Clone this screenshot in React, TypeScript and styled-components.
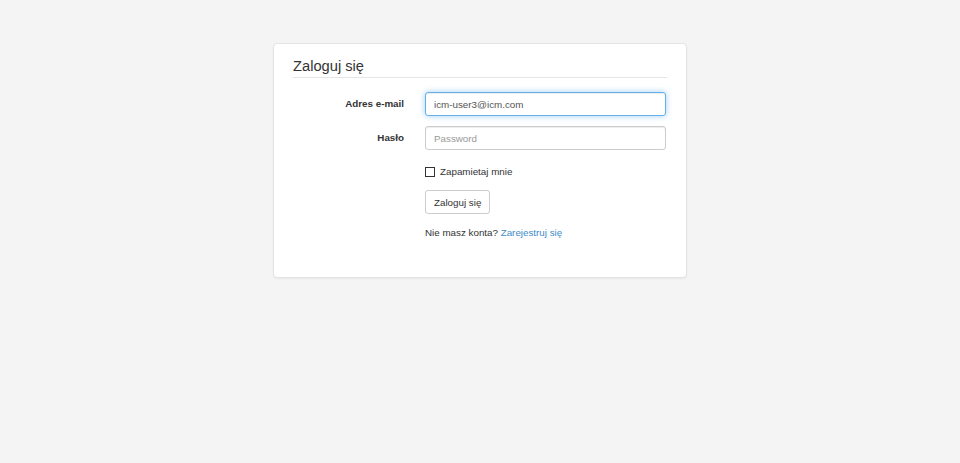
import React from "react";
import styled, { createGlobalStyle } from "styled-components";

const GlobalStyle = createGlobalStyle`
  html, body {
    margin: 0;
    padding: 0;
    background: #f4f4f4;
    font-family: "Liberation Sans", Arial, Helvetica, sans-serif;
    font-size: 9.8px;
    color: #333;
  }
  * { box-sizing: border-box; }
`;

const Page = styled.div`
  min-height: 463px;
  display: flex;
  justify-content: center;
  align-items: flex-start;
  padding-top: 43px;
`;

const Card = styled.div`
  width: 414px;
  background: #fff;
  border: 1px solid #e4e4e4;
  border-radius: 4px;
  box-shadow: 0 1px 2px rgba(0, 0, 0, 0.05);
  padding: 12px 19px 37px 19px;
`;

const Legend = styled.div`
  font-size: 14.7px;
  line-height: 21px;
  color: #333;
  border-bottom: 1px solid #e5e5e5;
  margin-bottom: 14px;
`;

const Form = styled.form`
  display: grid;
  grid-template-columns: 111px 241px;
  column-gap: 21px;
  row-gap: 10px;
  align-items: center;
`;

const Label = styled.label`
  text-align: right;
  font-weight: bold;
  line-height: 14px;
`;

const Input = styled.input<{ $focused?: boolean }>`
  display: block;
  width: 100%;
  height: 24px;
  margin: 0;
  padding: 0 8px;
  font-family: inherit;
  font-size: 9.8px;
  color: #555;
  background: #fff;
  border: 1px solid ${(p) => (p.$focused ? "#66afe9" : "#ccc")};
  border-radius: 3px;
  outline: none;
  box-shadow: ${(p) =>
    p.$focused
      ? "inset 0 1px 1px rgba(0,0,0,.075), 0 0 6px rgba(102,175,233,.6)"
      : "inset 0 1px 1px rgba(0,0,0,.075)"};
  &::placeholder {
    color: #999;
  }
`;

const Offset = styled.div<{ $top?: number }>`
  grid-column: 2;
  margin-top: ${(p) => p.$top ?? 0}px;
`;

const CheckRow = styled.label`
  display: flex;
  align-items: center;
  gap: 5px;
  line-height: 14px;
  padding-top: 5px;
  cursor: pointer;
`;

const Box = styled.span`
  display: inline-block;
  width: 10px;
  height: 10px;
  border: 1px solid #333;
  background: #fff;
`;

const Button = styled.button`
  display: block;
  height: 24px;
  padding: 0 8px;
  font-family: inherit;
  font-size: 9.8px;
  color: #333;
  background: #fff;
  border: 1px solid #ccc;
  border-radius: 3px;
  cursor: pointer;
`;

const Note = styled.div`
  line-height: 14px;
`;

const Link = styled.a`
  color: #428bca;
  text-decoration: none;
`;

export default function App() {
  return (
    <>
      <GlobalStyle />
      <Page>
        <Card>
          <Legend>Zaloguj się</Legend>
          <Form onSubmit={(e) => e.preventDefault()}>
            <Label htmlFor="email">Adres e-mail</Label>
            <Input id="email" $focused defaultValue="icm-user3@icm.com" />
            <Label htmlFor="pass">Hasło</Label>
            <Input id="pass" type="password" placeholder="Password" />
            <Offset>
              <CheckRow>
                <Box />
                Zapamietaj mnie
              </CheckRow>
            </Offset>
            <Offset $top={1}>
              <Button type="submit">Zaloguj się</Button>
            </Offset>
            <Offset $top={2}>
              <Note>
                Nie masz konta? <Link href="#">Zarejestruj się</Link>
              </Note>
            </Offset>
          </Form>
        </Card>
      </Page>
    </>
  );
}
